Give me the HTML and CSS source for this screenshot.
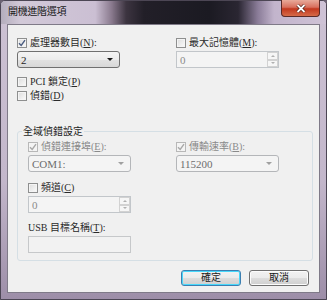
FILE: index.html
```html
<!DOCTYPE html>
<html lang="zh-Hant">
<head>
<meta charset="utf-8">
<link rel="stylesheet" href="styles.css">
</head>
<body>
<div class="dlg">
  <div class="cap">
    <span class="cap-text">開機進階選項</span>
    <span class="cap-close"><svg viewBox="0 0 10 9" width="10" height="9" aria-hidden="true"><path d="M1.5 1 L8.5 8 M8.5 1 L1.5 8" stroke="#4a1a10" stroke-width="3.2" fill="none"/><path d="M1.5 1 L8.5 8 M8.5 1 L1.5 8" stroke="#ffffff" stroke-width="1.8" fill="none"/></svg></span>
  </div>
  <div class="client">
    <div class="cols">
      <div class="col">
        <div class="check"><span class="box on"><svg viewBox="0 0 8 8"><path d="M1 4.2 L3.2 6.5 L7 1.2"/></svg></span>處理器數目(<u>N</u>):</div>
        <div class="combo"><span>2</span><span class="arrow"></span></div>
        <div class="check gap7"><span class="box"></span>PCI 鎖定(<u>P</u>)</div>
        <div class="check gap1"><span class="box"></span>偵錯(<u>D</u>)</div>
      </div>
      <div class="col">
        <div class="check"><span class="box"></span>最大記憶體(<u>M</u>):</div>
        <div class="spin"><span class="val">0</span><span class="spinbtns"><span class="sb up"></span><span class="sb down"></span></span></div>
      </div>
    </div>
    <fieldset class="group">
      <legend>全域偵錯設定</legend>
      <div class="gcols">
        <div class="col">
          <div class="check dis"><span class="box on"><svg viewBox="0 0 8 8"><path d="M1 4.2 L3.2 6.5 L7 1.2"/></svg></span>偵錯連接埠(<u>E</u>):</div>
          <div class="combo dis"><span>COM1:</span><span class="arrow"></span></div>
          <div class="check gap9"><span class="box"></span>頻道(<u>C</u>)</div>
          <div class="spin"><span class="val">0</span><span class="spinbtns"><span class="sb up"></span><span class="sb down"></span></span></div>
          <div class="label gap8">USB 目標名稱(<u>T</u>):</div>
          <div class="field"></div>
        </div>
        <div class="col">
          <div class="check dis"><span class="box on"><svg viewBox="0 0 8 8"><path d="M1 4.2 L3.2 6.5 L7 1.2"/></svg></span>傳輸速率(<u>B</u>):</div>
          <div class="combo dis"><span>115200</span><span class="arrow"></span></div>
        </div>
      </div>
    </fieldset>
    <div class="buttons">
      <span class="btn default">確定</span>
      <span class="btn">取消</span>
    </div>
  </div>
</div>
</body>
</html>
```

FILE: styles.css
```css
* {
  box-sizing: border-box;
  -webkit-print-color-adjust: exact;
  print-color-adjust: exact;
}
html, body { margin: 0; padding: 0; }
html { background: #6a6070; }
body {
  width: 327px;
  height: 300px;
  overflow: hidden;
  font-family: "Liberation Serif", "Noto Sans CJK TC", serif;
  font-size: 10px;
  color: #1e1e1e;
  background: #6a6070;
}
.dlg {
  width: 327px;
  height: 300px;
  display: flex;
  flex-direction: column;
  border: 1px solid #4c4654;
  border-radius: 5px 5px 0 0;
  padding: 0 6px 6px 6px;
  background: #c4b8cc linear-gradient(180deg, #cdc2d4 0%, #c3b7cb 60%, #9d8ea8 100%);
}
.cap {
  height: 23px;
  margin: 0 -6px;
  padding: 0 6px;
  display: flex;
  align-items: flex-start;
  justify-content: space-between;
  flex: none;
  border-radius: 4px 4px 0 0;
  background: #6a5e70 linear-gradient(90deg, #b4adbc 0%, #d2c9d8 6%, #cbbfd3 29%, #8a7a8e 34%, #3c3440 38.5%, #221f28 44%, #1b1a22 64%, #2a2632 73%, #8a7c98 79%, #c2b4cc 84%, #cfc3d6 100%);
}
.cap-text {
  padding: 5px 0 0 1px;
  line-height: 12px;
  font-size: 10px;
  color: #1a1a1a;
  letter-spacing: -0.3px;
}
.cap-close {
  width: 39px;
  height: 17px;
  margin-top: -1px;
  flex: none;
  border: 1px solid #5a2a28;
  border-top: 0;
  border-radius: 0 0 4px 4px;
  background: #c84a34 linear-gradient(180deg, #e8aa9a 0%, #d8705e 45%, #c2381f 55%, #d66a48 100%);
  display: flex;
  align-items: center;
  justify-content: center;
}
.client {
  flex: 1;
  background: #f0f0f0;
  border: 1px solid #7f7a88;
  padding: 11px 10px 0 9px;
  display: flex;
  flex-direction: column;
}
.cols { display: grid; grid-template-columns: 159px 103px; }
.gcols { display: grid; grid-template-columns: 148px 103px; }
.col { display: flex; flex-direction: column; align-items: flex-start; }
.check, .label {
  display: flex;
  align-items: center;
  height: 13px;
  line-height: 13px;
  white-space: nowrap;
  color: #2a2a2a;
}
.check .box {
  width: 10px;
  height: 10px;
  margin-right: 3px;
  border: 1px solid #8e8f8f;
  background: #eeeeee linear-gradient(135deg, #dcdcdc 0%, #fbfbfb 100%);
  box-shadow: inset 0 0 0 1px #f4f4f4;
  display: flex;
  align-items: center;
  justify-content: center;
  flex: none;
}
.check .box svg { width: 8px; height: 8px; }
.check .box path { fill: none; stroke: #4a5c80; stroke-width: 1.4; }
.check.dis { color: #8a8a8a; }
.check.dis .box { border-color: #b8b8b8; background: #f4f4f4; }
.check.dis .box path { stroke: #a8a8a8; }
u { text-decoration: underline; text-underline-offset: 1px; }
.gap7 { margin-top: 7px; }
.gap1 { margin-top: 1px; }
.gap9 { margin-top: 9px; }
.gap8 { margin-top: 8px; }
.combo, .spin, .field {
  width: 103px;
  height: 17px;
  margin-top: 2px;
  display: flex;
  align-items: center;
}
.combo {
  justify-content: space-between;
  padding: 0 6px 0 3px;
  border: 1px solid #707070;
  border-radius: 3px;
  background: #e6e6e6 linear-gradient(180deg, #f4f4f4 0%, #ececec 50%, #e2e2e2 51%, #d8d8d8 100%);
  font-size: 11px;
}
.combo .arrow {
  width: 0;
  height: 0;
  border-left: 3px solid transparent;
  border-right: 3px solid transparent;
  border-top: 3px solid #1a1a1a;
}
.combo.dis {
  border-color: #b4b6b9;
  background: #f4f4f4;
  color: #6d6d6d;
}
.combo.dis .arrow { border-top-color: #a0a0a0; }
.spin {
  border: 1px solid #c2c6ca;
  background: #f4f4f4;
  color: #8a8a8a;
  justify-content: space-between;
  padding-left: 3px;
  font-size: 11px;
}
.spinbtns {
  width: 11px;
  height: 15px;
  display: flex;
  flex-direction: column;
}
.sb {
  flex: 1;
  border: 1px solid #d2d2d2;
  background: #f6f6f6;
  display: flex;
  align-items: center;
  justify-content: center;
}
.sb::after {
  content: "";
  width: 0;
  height: 0;
  border-left: 2px solid transparent;
  border-right: 2px solid transparent;
}
.sb.up::after { border-bottom: 2px solid #b0b0b0; }
.sb.down::after { border-top: 2px solid #b0b0b0; }
.field {
  border: 1px solid #c6c8ca;
  background: #f2f2f2;
}
.group {
  margin: 23px 0 0 0;
  padding: 2px 10px 7px 10px;
  border: 1px solid #d5dfe5;
  border-radius: 3px;
  min-width: 0;
  width: 296px;
}
.group legend {
  margin-left: -6px;
  padding: 0 1px;
  line-height: 13px;
  color: #1e1e1e;
}
.buttons {
  margin-top: 9px;
  display: flex;
  justify-content: flex-end;
  gap: 8px;
}
.btn {
  width: 60px;
  height: 16px;
  border: 1px solid #707070;
  border-radius: 3px;
  background: #e4e4e4 linear-gradient(180deg, #f2f2f2 0%, #ebebeb 50%, #dddddd 51%, #cfcfcf 100%);
  text-align: center;
  line-height: 14px;
  color: #1a1a1a;
  box-shadow: inset 0 0 0 1px #fcfcfc;
}
.btn.default {
  border-color: #3c7fb1;
  box-shadow: inset 0 0 0 1px #48d8fb;
}
```
